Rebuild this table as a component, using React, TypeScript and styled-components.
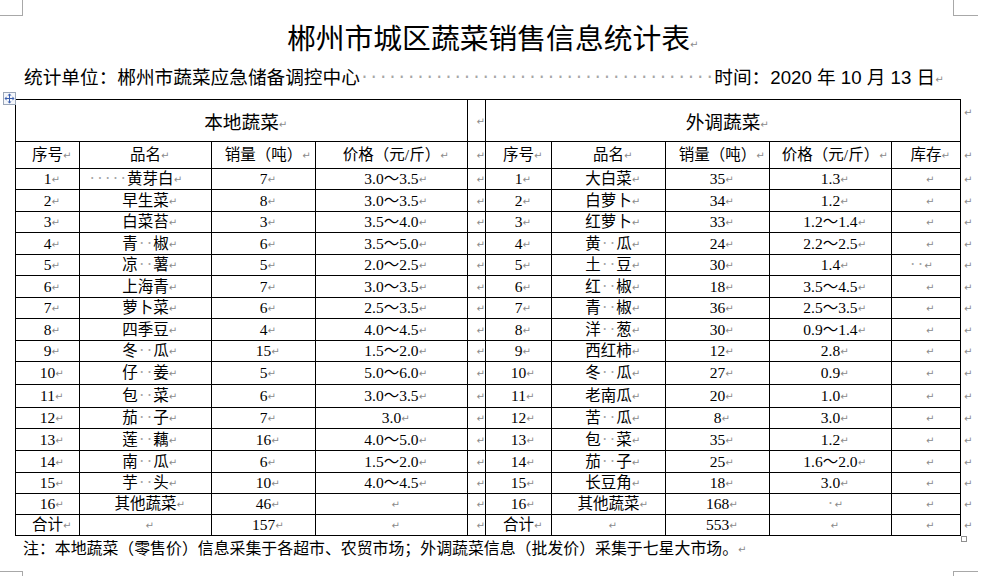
import React from "react";
import styled, { createGlobalStyle } from "styled-components";

const Global = createGlobalStyle`
  html, body { margin: 0; padding: 0; background: #fff; }
  body { font-family: "Noto Sans CJK SC", sans-serif; color: #000; }
`;

const Page = styled.div`
  position: relative;
  width: 991px;
  height: 576px;
  overflow: hidden;
  padding-top: 17px;
  box-sizing: border-box;
  background: #fff;
`;

const Title = styled.h1`
  margin: 0;
  padding-right: 14px;
  font-weight: normal;
  font-family: "Noto Sans CJK SC", sans-serif;
  font-size: 28.8px;
  line-height: 40px;
  text-align: center;
  white-space: nowrap;
`;

const InfoLine = styled.div`
  margin-top: 8px;
  padding-left: 24px;
  font-family: "Liberation Sans", "Noto Sans CJK SC", sans-serif;
  font-size: 18.67px;
  line-height: 26px;
  white-space: nowrap;
`;

const Sheet = styled.table`
  margin: 8px 0 0 15px;
  border-collapse: collapse;
  table-layout: fixed;
  width: 970px;
  font-family: "Liberation Serif", "Noto Sans CJK SC", serif;
  font-size: 15.5px;
  line-height: 18px;
`;

const Row = styled.tr<{ $h: number }>`
  height: ${(p) => p.$h}px;
`;

const Cell = styled.td`
  border: 1px solid #000;
  padding: 0;
  text-align: center;
  vertical-align: middle;
  white-space: nowrap;
`;

const GroupCell = styled(Cell)`
  font-family: "Noto Sans CJK SC", sans-serif;
  font-size: 18.67px;
`;

const EndCell = styled.td<{ $top?: boolean }>`
  border: none;
  padding: ${(p) => (p.$top ? "3px 0 0 3px" : "0 0 0 3px")};
  text-align: left;
  vertical-align: ${(p) => (p.$top ? "top" : "middle")};
`;

const Mark = styled.span<{ $flow?: boolean }>`
  display: inline-block;
  width: ${(p) => (p.$flow ? "auto" : "0")};
  overflow: visible;
  color: #8a8a8a;
  font-family: "DejaVu Sans", sans-serif;
  font-size: 10px;
  line-height: 1;
  vertical-align: 1px;
  white-space: nowrap;
`;

const Sp = styled.span`
  display: inline-block;
  width: 0.5em;
  text-align: center;
  color: #a6a6a6;
  font-family: "DejaVu Sans", sans-serif;
  font-weight: normal;
`;

const Trail = styled.span<{ $w: number }>`
  display: inline-block;
  width: ${(p) => p.$w}px;
`;

const Note = styled.p`
  margin: 1px 0 0 23px;
  font-family: "Noto Sans CJK SC", sans-serif;
  font-size: 15.9px;
  line-height: 22px;
  white-space: nowrap;
`;

const CropMark = styled.span<{ $x: number; $y: number; $w: number; $h: number; $side: "l" | "r"; $edge: "t" | "b" }>`
  position: absolute;
  left: ${(p) => p.$x}px;
  top: ${(p) => p.$y}px;
  width: ${(p) => p.$w}px;
  height: ${(p) => p.$h}px;
  border-color: #a8a8a8;
  border-style: solid;
  border-width: 0;
  ${(p) => (p.$side === "l" ? "border-right-width: 1px;" : "border-left-width: 1px;")}
  ${(p) => (p.$edge === "b" ? "border-bottom-width: 1px;" : "border-top-width: 1px;")}
`;

const MoveHandle = styled.span`
  position: absolute;
  left: 3px;
  top: 86px;
  width: 13px;
  height: 13px;
  display: block;
`;

const ResizeHandle = styled.span`
  position: absolute;
  left: 961px;
  top: 536px;
  width: 4px;
  height: 4px;
  border: 1px solid #8f8f8f;
  background: #fff;
`;

function Txt({ s }: { s: string }) {
  const parts: React.ReactNode[] = [];
  let buf = "";
  let k = 0;
  for (const ch of s) {
    if (ch === "·") {
      if (buf) {
        parts.push(buf);
        buf = "";
      }
      parts.push(<Sp key={k++}>·</Sp>);
    } else {
      buf += ch;
    }
  }
  if (buf) parts.push(buf);
  return <>{parts}</>;
}

function C({ s = "", trail, colSpan }: { s?: string; trail?: number; colSpan?: number }) {
  return (
    <Cell colSpan={colSpan}>
      <Txt s={s} />
      <Mark>↵</Mark>
      {trail ? <Trail $w={trail} /> : null}
    </Cell>
  );
}

type Item = {
  no: string;
  name: string;
  qty: string;
  price: string;
  stock?: string;
  nameTrail?: number;
  stockTrail?: number;
};

const localItems: Item[] = [
  { no: "1", name: "·····黄芽白", qty: "7", price: "3.0～3.5", nameTrail: 29 },
  { no: "2", name: "早生菜", qty: "8", price: "3.0～3.5" },
  { no: "3", name: "白菜苔", qty: "3", price: "3.5～4.0" },
  { no: "4", name: "青··椒", qty: "6", price: "3.5～5.0" },
  { no: "5", name: "凉··薯", qty: "5", price: "2.0～2.5" },
  { no: "6", name: "上海青", qty: "7", price: "3.0～3.5" },
  { no: "7", name: "萝卜菜", qty: "6", price: "2.5～3.5" },
  { no: "8", name: "四季豆", qty: "4", price: "4.0～4.5" },
  { no: "9", name: "冬··瓜", qty: "15", price: "1.5～2.0" },
  { no: "10", name: "仔··姜", qty: "5", price: "5.0～6.0" },
  { no: "11", name: "包··菜", qty: "6", price: "3.0～3.5" },
  { no: "12", name: "茄··子", qty: "7", price: "3.0" },
  { no: "13", name: "莲··藕", qty: "16", price: "4.0～5.0" },
  { no: "14", name: "南··瓜", qty: "6", price: "1.5～2.0" },
  { no: "15", name: "芋··头", qty: "10", price: "4.0～4.5" },
  { no: "16", name: "其他蔬菜", qty: "46", price: "" },
  { no: "合计", name: "", qty: "157", price: "" },
];

const outItems: Item[] = [
  { no: "1", name: "大白菜", qty: "35", price: "1.3" },
  { no: "2", name: "白萝卜", qty: "34", price: "1.2" },
  { no: "3", name: "红萝卜", qty: "33", price: "1.2～1.4" },
  { no: "4", name: "黄··瓜", qty: "24", price: "2.2～2.5" },
  { no: "5", name: "土··豆", qty: "30", price: "1.4", stock: "··", stockTrail: 19 },
  { no: "6", name: "红··椒", qty: "18", price: "3.5～4.5" },
  { no: "7", name: "青··椒", qty: "36", price: "2.5～3.5" },
  { no: "8", name: "洋··葱", qty: "30", price: "0.9～1.4" },
  { no: "9", name: "西红柿", qty: "12", price: "2.8" },
  { no: "10", name: "冬··瓜", qty: "27", price: "0.9" },
  { no: "11", name: "老南瓜", qty: "20", price: "1.0" },
  { no: "12", name: "苦··瓜", qty: "8", price: "3.0" },
  { no: "13", name: "包··菜", qty: "35", price: "1.2" },
  { no: "14", name: "茄··子", qty: "25", price: "1.6～2.0" },
  { no: "15", name: "长豆角", qty: "18", price: "3.0" },
  { no: "16", name: "其他蔬菜", qty: "168", price: "·" },
  { no: "合计", name: "", qty: "553", price: "" },
];

const rowHeights = [21, 22, 21, 22, 21, 22, 21, 22, 21, 23, 23, 21, 22, 22, 21, 21, 21];

const colWidths = [64, 132, 104, 152, 18, 66, 114, 104, 122, 69, 25];

const headers = ["序号", "品名", "销量（吨）", "价格（元/斤）"];

function MoveIcon() {
  return (
    <svg width="13" height="13" viewBox="0 0 13 13">
      <rect x="0.5" y="0.5" width="12" height="12" fill="#f4f6fa" stroke="#9aa6b8" />
      <g fill="none" stroke="#3b5fae" strokeWidth="1">
        <path d="M6.5 2.5v8M2.5 6.5h8" />
      </g>
      <g fill="#3b5fae">
        <path d="M6.5 1.5l2 2h-4z" />
        <path d="M6.5 11.5l2-2h-4z" />
        <path d="M1.5 6.5l2-2v4z" />
        <path d="M11.5 6.5l-2-2v4z" />
      </g>
    </svg>
  );
}

function Dots({ n }: { n: number }) {
  return (
    <>
      {Array.from({ length: n }, (_, i) => (
        <Sp key={i}>·</Sp>
      ))}
    </>
  );
}

export default function App() {
  return (
    <Page>
      <Global />
      <CropMark $x={0} $y={0} $w={22} $h={15} $side="l" $edge="b" />
      <CropMark $x={953} $y={0} $w={24} $h={15} $side="r" $edge="b" />
      <CropMark $x={0} $y={571} $w={22} $h={8} $side="l" $edge="t" />
      <CropMark $x={953} $y={571} $w={24} $h={8} $side="r" $edge="t" />

      <Title>
        郴州市城区蔬菜销售信息统计表<Mark>↵</Mark>
      </Title>
      <InfoLine>
        统计单位：郴州市蔬菜应急储备调控中心
        <Dots n={38} />
        时间：2020 年 10 月 13 日<Mark $flow>↵</Mark>
      </InfoLine>

      <MoveHandle>
        <MoveIcon />
      </MoveHandle>

      <Sheet>
        <colgroup>
          {colWidths.map((w, i) => (
            <col key={i} style={{ width: w }} />
          ))}
        </colgroup>
        <tbody>
          <Row $h={42}>
            <GroupCell colSpan={4}>
              本地蔬菜<Mark>↵</Mark>
            </GroupCell>
            <C />
            <GroupCell colSpan={5}>
              外调蔬菜<Mark>↵</Mark>
            </GroupCell>
            <EndCell $top>
              <Mark $flow>↵</Mark>
            </EndCell>
          </Row>
          <Row $h={27}>
            {headers.map((h) => (
              <C key={"l" + h} s={h} />
            ))}
            <C />
            {headers.map((h) => (
              <C key={"r" + h} s={h} />
            ))}
            <C s="库存" />
            <EndCell>
              <Mark $flow>↵</Mark>
            </EndCell>
          </Row>
          {localItems.map((l, i) => {
            const r = outItems[i];
            return (
              <Row key={i} $h={rowHeights[i]}>
                <C s={l.no} />
                <C s={l.name} trail={l.nameTrail} />
                <C s={l.qty} />
                <C s={l.price} />
                <C />
                <C s={r.no} />
                <C s={r.name} />
                <C s={r.qty} />
                <C s={r.price} />
                <C s={r.stock} trail={r.stockTrail} />
                <EndCell>
                  <Mark $flow>↵</Mark>
                </EndCell>
              </Row>
            );
          })}
        </tbody>
      </Sheet>
      <ResizeHandle />

      <Note>
        注：本地蔬菜（零售价）信息采集于各超市、农贸市场；外调蔬菜信息（批发价）采集于七星大市场。<Mark $flow>↵</Mark>
      </Note>
    </Page>
  );
}
